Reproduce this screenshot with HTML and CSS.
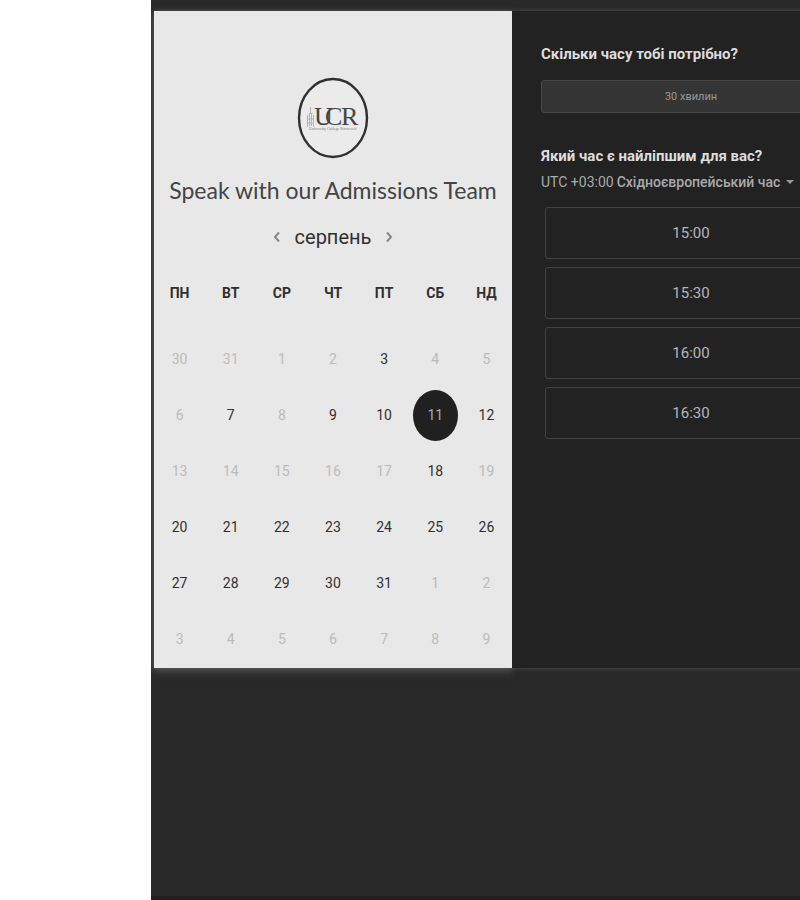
FILE: index.html
```html
<!DOCTYPE html>
<html lang="uk">
<head>
<meta charset="utf-8">
<title>Speak with our Admissions Team</title>
<link rel="stylesheet" href="styles.css">
</head>
<body>
<main class="stage">
  <div class="scheduler">
    <section class="calendar">
      <svg class="logo" viewBox="0 0 72 82" role="img" aria-label="UCR">
        <ellipse cx="36" cy="41" rx="34" ry="39" fill="#ebebeb" stroke="#303030" stroke-width="2.4"/>
        <g fill="none" stroke="#b4b4b4" stroke-width="1">
          <path d="M13.500 30v6M11.500 36.500h4M10.500 38v12M12.500 37v12M14.500 37v12M16.500 38v12M10 42h7M10 46h7"/>
        </g>
        <text class="logo-name" x="17 28 44" y="48">UCR</text>
        <text class="logo-caption" x="12" y="53">University College Roosevelt</text>
      </svg>
      <h1 class="title">Speak with our Admissions Team</h1>
      <div class="month">
        <button class="arrow" type="button" aria-label="Попередній місяць"><svg viewBox="0 0 8 12"><path d="M6 1.500 2 6l4 4.500"/></svg></button>
        <h2 class="month-name">серпень</h2>
        <button class="arrow" type="button" aria-label="Наступний місяць"><svg viewBox="0 0 8 12"><path d="m2 1.500 4 4.500-4 4.500"/></svg></button>
      </div>
      <table class="days">
        <thead>
          <tr><th>ПН</th><th>ВТ</th><th>СР</th><th>ЧТ</th><th>ПТ</th><th>СБ</th><th>НД</th></tr>
        </thead>
        <tbody>
          <tr><td><button class="day" disabled>30</button></td><td><button class="day" disabled>31</button></td><td><button class="day" disabled>1</button></td><td><button class="day" disabled>2</button></td><td><button class="day">3</button></td><td><button class="day" disabled>4</button></td><td><button class="day" disabled>5</button></td></tr>
          <tr><td><button class="day" disabled>6</button></td><td><button class="day">7</button></td><td><button class="day" disabled>8</button></td><td><button class="day">9</button></td><td><button class="day">10</button></td><td><button class="day selected" aria-pressed="true">11</button></td><td><button class="day">12</button></td></tr>
          <tr><td><button class="day" disabled>13</button></td><td><button class="day" disabled>14</button></td><td><button class="day" disabled>15</button></td><td><button class="day" disabled>16</button></td><td><button class="day" disabled>17</button></td><td><button class="day">18</button></td><td><button class="day" disabled>19</button></td></tr>
          <tr><td><button class="day">20</button></td><td><button class="day">21</button></td><td><button class="day">22</button></td><td><button class="day">23</button></td><td><button class="day">24</button></td><td><button class="day">25</button></td><td><button class="day">26</button></td></tr>
          <tr><td><button class="day">27</button></td><td><button class="day">28</button></td><td><button class="day">29</button></td><td><button class="day">30</button></td><td><button class="day">31</button></td><td><button class="day" disabled>1</button></td><td><button class="day" disabled>2</button></td></tr>
          <tr><td><button class="day" disabled>3</button></td><td><button class="day" disabled>4</button></td><td><button class="day" disabled>5</button></td><td><button class="day" disabled>6</button></td><td><button class="day" disabled>7</button></td><td><button class="day" disabled>8</button></td><td><button class="day" disabled>9</button></td></tr>
        </tbody>
      </table>
    </section>
    <section class="times">
      <h2 class="question">Скільки часу тобі потрібно?</h2>
      <button class="duration" type="button">30 хвилин</button>
      <h2 class="question">Який час є найліпшим для вас?</h2>
      <div class="zone">
        <label for="zone">UTC +03:00</label>
        <select id="zone"><option>Східноєвропейський час</option></select>
        <svg class="caret" viewBox="0 0 8 4"><path d="M0 0h8L4 4z"/></svg>
      </div>
      <div class="slots">
        <button class="slot" type="button">15:00</button>
        <button class="slot" type="button">15:30</button>
        <button class="slot" type="button">16:00</button>
        <button class="slot" type="button">16:30</button>
      </div>
    </section>
  </div>
</main>
</body>
</html>
```
FILE: styles.css
```css
* {
  box-sizing: border-box;
}

body {
  margin: 0;
  background: #fff;
  font-family: Roboto, "Liberation Sans", sans-serif;
  overflow: hidden;
}

h1,
h2 {
  margin: 0;
}

button,
select {
  margin: 0;
  padding: 0;
  border: 0;
  background: none;
  font-family: inherit;
}

.stage {
  min-height: 100vh;
  margin-left: 151px;
  padding: 11px 0 0 3px;
  background: #292929;
  border-bottom: 4px solid #231f21;
  overflow: hidden;
}

.scheduler {
  display: grid;
  grid-template-columns: 358px 358px;
  width: max-content;
  box-shadow: 0 0 4px #555;
}

.calendar {
  display: flex;
  flex-direction: column;
  align-items: center;
  padding: 66px 0 1px;
  background: #e8e8e8;
  color: #303030;
  box-shadow: 0 3px 8px #555;
}

.logo {
  width: 72px;
  height: 82px;
}

.logo-name {
  font: 26px "Liberation Serif", serif;
  fill: #444;
}

.logo-caption {
  font: 4px "Liberation Serif", serif;
  fill: #777;
}

.title {
  margin-top: 13px;
  font: 400 23px/36px Lato, sans-serif;
  color: #444;
  white-space: nowrap;
}

.month {
  display: flex;
  align-items: center;
  gap: 14px;
  margin-top: 11px;
}

.month-name {
  font-size: 20px;
  font-weight: 400;
  line-height: 36px;
}

.arrow svg {
  display: block;
  width: 8px;
  height: 12px;
  fill: none;
  stroke: #888;
  stroke-width: 2;
}

.days {
  width: 100%;
  margin-top: 28px;
  table-layout: fixed;
  border-collapse: collapse;
}

.days th {
  height: 20px;
  padding: 0 0 28px;
  font-size: 14px;
  line-height: 20px;
}

.days td {
  height: 56px;
  padding: 0;
  text-align: center;
}

.day {
  display: block;
  width: 45px;
  height: 51px;
  margin: 0 auto;
  font-size: 14px;
  line-height: 20px;
  color: #303030;
}

.day:disabled {
  color: #bbb;
}

.selected {
  border-radius: 50%;
  background: #202020;
  color: #aaa;
}

.times {
  padding: 32px 29px;
  background: #222;
  color: #ddd;
}

.question {
  font-size: 15px;
  line-height: 22px;
}

.duration {
  display: block;
  width: 100%;
  height: 33px;
  margin: 15px 0 32px;
  border: 1px solid #484848;
  border-radius: 3px;
  background: #353535;
  color: #999;
  font-size: 11px;
}

.zone {
  display: flex;
  align-items: center;
  gap: 3px;
  height: 30px;
  color: #aaa;
  font-size: 14px;
  line-height: 20px;
}

.zone select {
  appearance: none;
  color: #aaa;
  font-size: 14px;
  font-weight: 500;
  line-height: 20px;
}

.caret {
  width: 8px;
  height: 4px;
  margin-left: 2px;
  fill: #999;
}

.slots {
  display: grid;
  gap: 8px;
  padding: 10px 4px 0;
}

.slot {
  height: 52px;
  border: 1px solid #424242;
  border-radius: 3px;
  color: #b5b5b5;
  font-size: 15px;
  line-height: 20px;
}
```
